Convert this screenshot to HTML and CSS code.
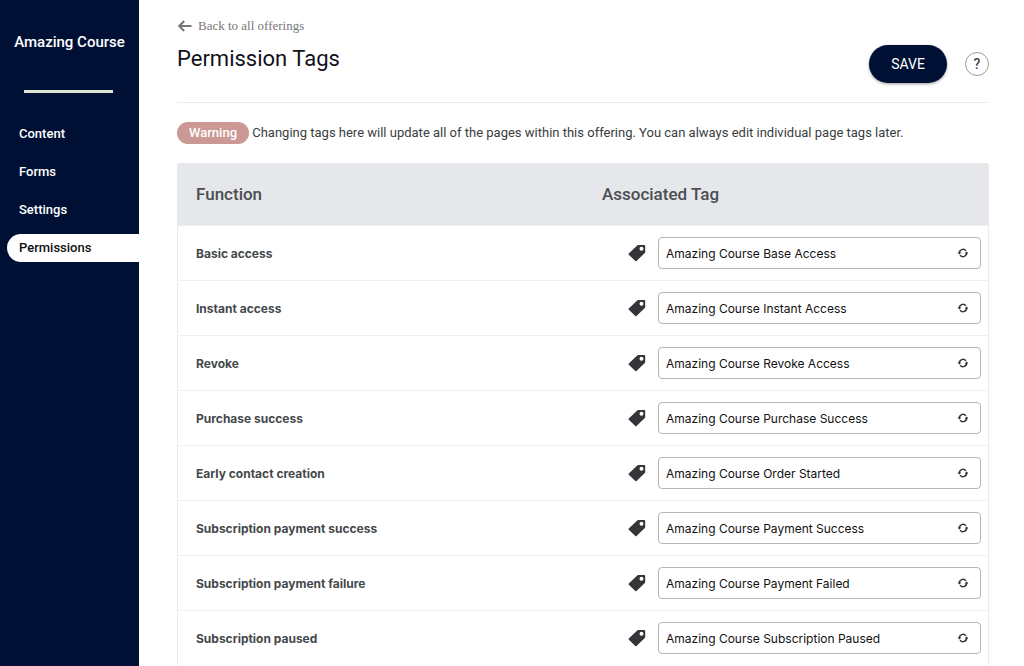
FILE: index.html
```html
<!DOCTYPE html>
<html lang="en">
<head>
    <meta charset="UTF-8">
    <meta name="viewport" content="width=device-width, initial-scale=1.0">
    <title>Permission Tags</title>
    <link rel="stylesheet" href="styles.css">
</head>
<body>

<!-- Shared icons -->
<svg class="icon-defs" aria-hidden="true">
    <symbol id="icon-tag" viewBox="0 0 18 18">
        <path fill-rule="evenodd" d="M10.400 1H16.200q1 0 1 1v6q0 .6-.4 1L8.500 17q-.6.600-1.200 0L.800 10.700q-.6-.6 0-1.200L9.200 1.500q.5-.5 1.200-.5zM13.500 2.800a2 2 0 1 0 0 4 2 2 0 0 0 0-4z"/>
    </symbol>
    <symbol id="icon-refresh" viewBox="0 0 12 10">
        <path fill="none" stroke="currentColor" stroke-width="1.500" d="M2.400 5.300A3.600 3.600 0 0 1 8.900 2.900M9.600 4.700A3.600 3.600 0 0 1 3.100 7.100"/>
        <path d="M.500 4.400h3.800L2.400 6.500zM7.700 5.600h3.800L9.600 3.500z"/>
    </symbol>
</svg>

<div class="page">
    <aside class="sidebar">
        <div class="course-name">Amazing Course</div>
        <div class="divider"></div>
        <nav class="menu">
            <a href="#content">Content</a>
            <a href="#forms">Forms</a>
            <a href="#settings">Settings</a>
            <a href="#permissions" class="active">Permissions</a>
        </nav>
    </aside>

    <main class="main">
        <header class="header">
            <div class="heading">
                <a class="back" href="#offerings">
                    <svg class="back-icon" viewBox="0 0 14 12" aria-hidden="true">
                        <path d="M13.500 6H1.500M6.200 1L1.200 6l5 5"/>
                    </svg>
                    Back to all offerings
                </a>
                <h1>Permission Tags</h1>
            </div>
            <div class="actions">
                <button type="button" class="save">SAVE</button>
                <button type="button" class="help" aria-label="Help">?</button>
            </div>
        </header>

        <p class="notice"><span class="badge">Warning</span> Changing tags here will update all of the pages within this offering. You can always edit individual page tags later.</p>

        <table class="tags">
            <thead>
                <tr>
                    <th scope="col">Function</th>
                    <th scope="col">Associated Tag</th>
                </tr>
            </thead>
            <tbody>
                <tr>
                    <td><label for="basic">Basic access</label></td>
                    <td>
                        <div class="tag-cell">
                            <svg class="tag-icon" aria-hidden="true"><use href="#icon-tag"/></svg>
                            <div class="tag-field">
                                <input type="text" id="basic" value="Amazing Course Base Access">
                                <button type="button" aria-label="Refresh"><svg><use href="#icon-refresh"/></svg></button>
                            </div>
                        </div>
                    </td>
                </tr>
                <tr>
                    <td><label for="instant">Instant access</label></td>
                    <td>
                        <div class="tag-cell">
                            <svg class="tag-icon" aria-hidden="true"><use href="#icon-tag"/></svg>
                            <div class="tag-field">
                                <input type="text" id="instant" value="Amazing Course Instant Access">
                                <button type="button" aria-label="Refresh"><svg><use href="#icon-refresh"/></svg></button>
                            </div>
                        </div>
                    </td>
                </tr>
                <tr>
                    <td><label for="revoke">Revoke</label></td>
                    <td>
                        <div class="tag-cell">
                            <svg class="tag-icon" aria-hidden="true"><use href="#icon-tag"/></svg>
                            <div class="tag-field">
                                <input type="text" id="revoke" value="Amazing Course Revoke Access">
                                <button type="button" aria-label="Refresh"><svg><use href="#icon-refresh"/></svg></button>
                            </div>
                        </div>
                    </td>
                </tr>
                <tr>
                    <td><label for="purchase">Purchase success</label></td>
                    <td>
                        <div class="tag-cell">
                            <svg class="tag-icon" aria-hidden="true"><use href="#icon-tag"/></svg>
                            <div class="tag-field">
                                <input type="text" id="purchase" value="Amazing Course Purchase Success">
                                <button type="button" aria-label="Refresh"><svg><use href="#icon-refresh"/></svg></button>
                            </div>
                        </div>
                    </td>
                </tr>
                <tr>
                    <td><label for="early">Early contact creation</label></td>
                    <td>
                        <div class="tag-cell">
                            <svg class="tag-icon" aria-hidden="true"><use href="#icon-tag"/></svg>
                            <div class="tag-field">
                                <input type="text" id="early" value="Amazing Course Order Started">
                                <button type="button" aria-label="Refresh"><svg><use href="#icon-refresh"/></svg></button>
                            </div>
                        </div>
                    </td>
                </tr>
                <tr>
                    <td><label for="sub-success">Subscription payment success</label></td>
                    <td>
                        <div class="tag-cell">
                            <svg class="tag-icon" aria-hidden="true"><use href="#icon-tag"/></svg>
                            <div class="tag-field">
                                <input type="text" id="sub-success" value="Amazing Course Payment Success">
                                <button type="button" aria-label="Refresh"><svg><use href="#icon-refresh"/></svg></button>
                            </div>
                        </div>
                    </td>
                </tr>
                <tr>
                    <td><label for="sub-failure">Subscription payment failure</label></td>
                    <td>
                        <div class="tag-cell">
                            <svg class="tag-icon" aria-hidden="true"><use href="#icon-tag"/></svg>
                            <div class="tag-field">
                                <input type="text" id="sub-failure" value="Amazing Course Payment Failed">
                                <button type="button" aria-label="Refresh"><svg><use href="#icon-refresh"/></svg></button>
                            </div>
                        </div>
                    </td>
                </tr>
                <tr>
                    <td><label for="sub-paused">Subscription paused</label></td>
                    <td>
                        <div class="tag-cell">
                            <svg class="tag-icon" aria-hidden="true"><use href="#icon-tag"/></svg>
                            <div class="tag-field">
                                <input type="text" id="sub-paused" value="Amazing Course Subscription Paused">
                                <button type="button" aria-label="Refresh"><svg><use href="#icon-refresh"/></svg></button>
                            </div>
                        </div>
                    </td>
                </tr>
            </tbody>
        </table>
    </main>
</div>

</body>
</html>
```
FILE: styles.css
```css
* {
    box-sizing: border-box;
}
body {
    margin: 0;
    font-family: Roboto, sans-serif;
    font-size: 13px;
    color: #3a3d40;
    background: #fff;
}
.icon-defs {
    display: none;
}
.page {
    display: flex;
    min-height: 100vh;
}

/* Sidebar */
.sidebar {
    flex: 0 0 139px;
    padding-top: 32px;
    background: #001035;
    color: #fff;
}
.course-name {
    font-size: 15px;
    font-weight: 500;
    line-height: 20px;
    text-align: center;
}
.divider {
    height: 3px;
    margin: 38px 26px 27px 24px;
    background: #dfe5d3;
}
.menu {
    display: flex;
    flex-direction: column;
    gap: 10px;
    padding-left: 7px;
}
.menu a {
    padding-left: 12px;
    line-height: 28px;
    font-weight: 500;
    color: #fff;
    text-decoration: none;
    border-radius: 14px 0 0 14px;
}
.menu a.active {
    background: #fff;
    color: #111;
}

/* Header */
.main {
    flex: 1;
    padding: 16px 35px 0 38px;
}
.header {
    display: flex;
    justify-content: space-between;
    height: 87px;
    border-bottom: 1px solid #ececec;
}
.back {
    display: flex;
    align-items: center;
    gap: 6px;
    font-family: "Liberation Serif", serif;
    font-size: 13px;
    line-height: 20px;
    color: #777;
    text-decoration: none;
}
.back-icon {
    width: 14px;
    height: 12px;
    margin-left: 1px;
    fill: none;
    stroke: #777;
    stroke-width: 2;
}
h1 {
    margin: 8px 0 0;
    font-size: 22px;
    font-weight: 400;
    line-height: 30px;
    color: #111120;
}
.actions {
    display: flex;
    align-items: center;
    gap: 18px;
    padding-top: 10px;
}
.save {
    width: 78px;
    height: 38px;
    padding: 0;
    border: none;
    border-radius: 19px;
    background: #001035;
    color: #fff;
    font-family: inherit;
    font-size: 14px;
    box-shadow: 0 1px 3px rgba(0, 0, 0, 0.4);
    cursor: pointer;
}
.help {
    width: 24px;
    height: 24px;
    padding: 0;
    border: 1px solid #999;
    border-radius: 50%;
    background: #fff;
    color: #444;
    font-family: inherit;
    font-size: 14px;
    font-weight: 500;
    cursor: pointer;
}

/* Warning line */
.notice {
    margin: 18px 0;
    line-height: 24px;
}
.badge {
    display: inline-block;
    padding: 0 12px;
    line-height: 22px;
    border-radius: 11px;
    background: #cb9896;
    color: #fff;
    font-weight: 500;
}

/* Tags table */
.tags {
    width: 100%;
    table-layout: fixed;
    border-collapse: separate;
    border-spacing: 0;
    border-radius: 3px 3px 0 0;
    overflow: hidden;
}
.tags th {
    height: 62px;
    padding: 0 19px;
    background: #e5e7ea;
    font-size: 17px;
    font-weight: 500;
    text-align: left;
    color: #4b4e52;
}
.tags td {
    height: 55px;
    padding: 0 7px 0 18px;
    border-top: 1px solid #f0f0f2;
}
.tags td:first-child {
    border-left: 1px solid #ececee;
}
.tags td:last-child {
    border-right: 1px solid #ececee;
}
.tags label {
    font-family: Inter, sans-serif;
    font-size: 12px;
    font-weight: 700;
    color: #44484b;
}
.tag-cell {
    display: flex;
    align-items: center;
    gap: 12px;
    padding-left: 27px;
}
.tag-icon {
    flex: none;
    width: 18px;
    height: 18px;
    fill: #333538;
}
.tag-field {
    flex: 1;
    display: flex;
    align-items: center;
    height: 32px;
    padding: 0 11px 0 7px;
    border: 1px solid #b5b5b5;
    border-radius: 4px;
}
.tag-field input {
    flex: 1;
    min-width: 0;
    padding: 0;
    border: none;
    outline: none;
    background: none;
    font-family: Inter, sans-serif;
    font-size: 12px;
    color: #111;
}
.tag-field button {
    display: flex;
    padding: 0;
    border: none;
    background: none;
    color: #333;
    cursor: pointer;
}
.tag-field button svg {
    width: 12px;
    height: 10px;
    fill: currentColor;
}
```
